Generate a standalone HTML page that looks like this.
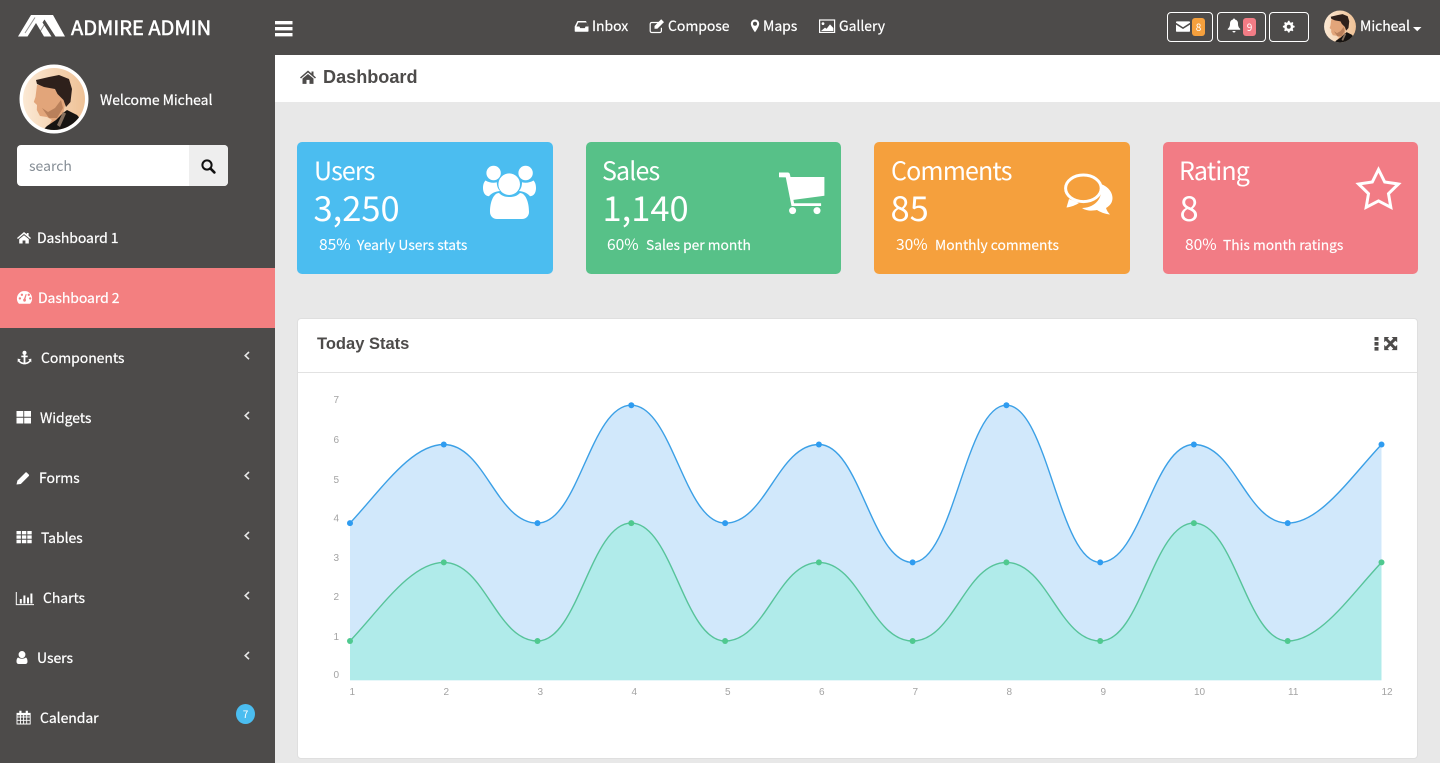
<!DOCTYPE html>
<html lang="en">
<head>
<meta charset="utf-8">
<title>Admire Admin - Dashboard</title>
<style>
*{box-sizing:border-box}
html,body{margin:0;padding:0;width:1440px;height:763px;overflow:hidden;background:#e8e8e8}
body{position:relative;font-family:"Noto Sans CJK SC","Liberation Sans",sans-serif;color:#fff}
.box,.t{position:absolute}
.t{white-space:nowrap;line-height:20px;height:20px}
.nav{font-size:14px;letter-spacing:-.05px;-webkit-text-stroke:.2px #fff}
.m{font-size:14px;letter-spacing:-.07px;-webkit-text-stroke:.2px #fff}
.ct{font-size:25px;letter-spacing:-.85px;line-height:36px;height:36px}
.cn{font-size:34.5px;line-height:44px;height:44px}
.cp{font-size:15.6px}
.cs{font-size:13.8px;-webkit-text-stroke:.15px #fff}
.card{position:absolute;top:142px;height:132px;border-radius:5px}
.btn{position:absolute;top:12px;height:30px;border:1px solid #fff;border-radius:4px}
.badge{position:absolute;top:18px;width:13px;height:18px;border-radius:3px;font-size:10px;line-height:18px;text-align:center}
svg{position:absolute;left:0;top:0}
.yl{font:10px "Liberation Sans",sans-serif;fill:#a3a3a3}
</style>
</head>
<body>
<div class="box" style="left:0;top:0;width:1440px;height:55px;background:#4d4b4a"></div>
<div class="box" style="left:0;top:55px;width:275px;height:708px;background:#4d4b4a"></div>
<div class="box" style="left:275px;top:55px;width:1165px;height:47px;background:#fff"></div>
<div class="box" style="left:0;top:268px;width:275px;height:60px;background:#f37f80"></div>

<div class="t" style="left:71px;top:13px;font-size:20.1px;line-height:28px;height:28px;-webkit-text-stroke:.55px #fff">ADMIRE ADMIN</div>

<div class="t nav" style="left:592px;top:16px">Inbox</div>
<div class="t nav" style="left:668px;top:16px">Compose</div>
<div class="t nav" style="left:763px;top:16px">Maps</div>
<div class="t nav" style="left:839px;top:16px">Gallery</div>

<div class="btn" style="left:1167px;width:46px"></div>
<div class="btn" style="left:1217px;width:49px"></div>
<div class="btn" style="left:1269px;width:40px"></div>
<div class="badge" style="left:1192px;background:#f5a03d">8</div>
<div class="badge" style="left:1243px;background:#f27c85">9</div>
<div class="t nav" style="left:1360px;top:16px">Micheal</div>

<div class="t m" style="left:100px;top:90px">Welcome Micheal</div>

<div class="box" style="left:17px;top:145px;width:211px;height:41px;background:#fff;border-radius:4px;overflow:hidden">
  <div class="box" style="left:172px;top:0;width:39px;height:41px;background:#eee"></div>
  <div class="t" style="left:12px;top:11px;font-size:14px;color:#868e96">search</div>
</div>

<div class="t m" style="left:37px;top:228px">Dashboard 1</div>
<div class="t m" style="left:38px;top:288px">Dashboard 2</div>
<div class="t m" style="left:41px;top:348px">Components</div>
<div class="t m" style="left:40px;top:408px">Widgets</div>
<div class="t m" style="left:39px;top:468px">Forms</div>
<div class="t m" style="left:41px;top:528px">Tables</div>
<div class="t m" style="left:43px;top:588px">Charts</div>
<div class="t m" style="left:37px;top:648px">Users</div>
<div class="t m" style="left:40px;top:708px">Calendar</div>
<div class="box" style="left:236px;top:704px;width:19px;height:20px;border-radius:50%;background:#4bbdf0;font-size:10px;line-height:20px;text-align:center">7</div>

<div class="t" style="left:323px;top:66px;font:bold 18.1px/22px 'Liberation Sans',sans-serif;height:22px;color:#4d4b4a">Dashboard</div>

<div class="card" style="left:297px;width:256px;background:#4bbdf0"></div>
<div class="card" style="left:586px;width:255px;background:#57c188"></div>
<div class="card" style="left:874px;width:256px;background:#f5a03d"></div>
<div class="card" style="left:1163px;width:255px;background:#f27c85"></div>

<div class="t ct" style="left:314px;top:152px">Users</div>
<div class="t cn" style="left:313.5px;top:184px">3,250</div>
<div class="t cp" style="left:319px;top:234px">85%</div>
<div class="t cs" style="left:357px;top:234px">Yearly Users stats</div>

<div class="t ct" style="left:602px;top:152px">Sales</div>
<div class="t cn" style="left:602.5px;top:184px">1,140</div>
<div class="t cp" style="left:607px;top:234px">60%</div>
<div class="t cs" style="left:646px;top:234px">Sales per month</div>

<div class="t ct" style="left:891px;top:152px">Comments</div>
<div class="t cn" style="left:890.5px;top:184px">85</div>
<div class="t cp" style="left:896px;top:234px">30%</div>
<div class="t cs" style="left:935px;top:234px">Monthly comments</div>

<div class="t ct" style="left:1179px;top:152px">Rating</div>
<div class="t cn" style="left:1179.5px;top:184px">8</div>
<div class="t cp" style="left:1185px;top:234px">80%</div>
<div class="t cs" style="left:1223px;top:234px">This month ratings</div>

<div class="box" style="left:297px;top:318px;width:1121px;height:441px;background:#fff;border:1px solid #dfdfdf;border-radius:4px"></div>
<div class="box" style="left:298px;top:372px;width:1119px;height:1px;background:#e2e2e2"></div>
<div class="t" style="left:317px;top:333px;font:bold 16.5px/22px 'Liberation Sans',sans-serif;height:22px;color:#4d4b4a">Today Stats</div>

<svg width="1440" height="763" viewBox="0 0 1440 763" xmlns="http://www.w3.org/2000/svg">
  <defs>
    <clipPath id="c1"><circle cx="35" cy="35" r="31"/></clipPath>
    <linearGradient id="sk" x1="0" x2="1" y1="0" y2="0"><stop offset="0" stop-color="#fcebd8"/><stop offset="1" stop-color="#eebf92"/></linearGradient>
    <symbol id="face" viewBox="0 0 70 70">
      <g clip-path="url(#c1)">
        <rect width="70" height="70" fill="url(#sk)"/>
        <path d="M18 21L16.5 33 14.8 38 18 41 17.8 46 21 52 28 53 33 56 30 61 44 51 46 40 40 22Z" fill="#e2a57a"/>
        <path d="M23 44L29 48 36 44 42 36 44 44 38 54 30 54Z" fill="#b9805b"/>
        <path d="M17 16L30 13 40 11 50 15 53 25 51.5 38 47 43 44.5 36 38.5 30 36 25 25 23 18 20Z" fill="#2e201b"/>
        <path d="M20 70L28 62 37 56 44 49 48 46 58 51 66 60 62 70Z" fill="#171412"/>
        <path d="M44 48L47 49.5 41 63 38 61Z" fill="#85705f"/>
      </g>
    </symbol>
  </defs>

  <!-- logo -->
  <path d="M18 36.5L31 15H53L65 36.5H55.5L44.5 19.5 42.5 22.5 51.5 36.5H44L36 23 27.5 36.5Z" fill="#fff"/>
  <path d="M25 33L35 17.5M37 36.5L46 22" stroke="#4d4b4a" stroke-width="1" fill="none" opacity=".6"/>

  <!-- hamburger -->
  <path d="M275 21h17.5v3.4H275zM275 27h17.5v3.4H275zM275 33h17.5v3.4H275z" fill="#fff"/>

  <!-- top nav icons -->
  <path d="M577.5 21h8.5l2.5 5.5V31q0 .8-.8.8h-12.2q-.8 0-.8-.8v-4.5zM578.3 22.5l-1.8 4h2.9l.8 1.6h4.6l.8-1.6h2.8l-1.8-4z" fill="#fff" fill-rule="evenodd"/>
  <path d="M660.5 22.5h-8.7a1.6 1.6 0 0 0-1.6 1.6v6.8a1.6 1.6 0 0 0 1.6 1.6h8a1.6 1.6 0 0 0 1.6-1.6v-3.2" fill="none" stroke="#fff" stroke-width="1.2"/>
  <path d="M654.5 26l6.7-6.7 2.8 2.8-6.7 6.7h-2.8z" fill="#fff"/>
  <path d="M755 19.5a4.2 4.2 0 0 0-4.2 4.2c0 2.3 2.6 6.3 4.2 8.6 1.6-2.3 4.2-6.3 4.2-8.6a4.2 4.2 0 0 0-4.2-4.2zm0 6.2a2 2 0 1 1 0-4 2 2 0 0 1 0 4z" fill="#fff" fill-rule="evenodd"/>
  <rect x="819.6" y="20" width="15" height="12.4" fill="none" stroke="#fff" stroke-width="1.2"/>
  <circle cx="823" cy="23.6" r="1.4" fill="#fff"/><path d="M821 31l4-3.4 1.6 1.2 3.4-4.4 3.4 3.6V31z" fill="#fff"/>

  <!-- mail / bell / gear -->
  <path d="M1176 22.2q0-.8.8-.8h12.4q.8 0 .8.8v.6l-7 4.4-7-4.4zM1176 24.6l7 4.4 7-4.4V31q0 .8-.8.8h-12.4q-.8 0-.8-.8z" fill="#fff"/>
  <path d="M1234 18.5c.8 0 1 .6 1 1 2 .5 3 2 3 4.2 0 2.6.8 3.8 2.2 5.1v1h-12.4v-1c1.4-1.3 2.2-2.5 2.2-5.1 0-2.2 1-3.7 3-4.2 0-.4.2-1 1-1zM1232.5 31h3a1.5 1.5 0 0 1-3 0z" fill="#fff"/>
  <path d="M1289.5 20.8l.4 1.4 1.2.5 1.3-.7 1 1-.7 1.3.5 1.2 1.4.4v1.5l-1.4.4-.5 1.2.7 1.3-1 1-1.3-.7-1.2.5-.4 1.4h-1.5l-.4-1.4-1.2-.5-1.3.7-1-1 .7-1.3-.5-1.2-1.4-.4v-1.5l1.4-.4.5-1.2-.7-1.3 1-1 1.3.7 1.2-.5.4-1.4zm-.75 3.9a2 2 0 1 0 0 4 2 2 0 0 0 0-4z" fill="#fff" fill-rule="evenodd"/>
  <use href="#face" x="1322" y="8.5" width="36" height="36"/>
  <path d="M1413 27h8.5l-4.25 4.2z" fill="#fff"/>

  <!-- sidebar avatar -->
  <circle cx="54" cy="99" r="34.5" fill="#fff"/>
  <use href="#face" x="19" y="64" width="70" height="70"/>

  <!-- search icon -->
  <circle cx="207" cy="165" r="4.6" fill="none" stroke="#111" stroke-width="2"/>
  <path d="M210.4 168.4l4 4" stroke="#111" stroke-width="2.6" stroke-linecap="round"/>

  <!-- home title icon -->
  <path d="M308 70.5L300 77.5l1 1 7-6 7 6 1-1-2.5-2.2V71.5h-2v2zM308 74L302.5 78.5v5.4h4v-4h3v4h4v-5.4z" fill="#4d4b4a"/>

  <!-- sidebar icons -->
  <path d="M24 232L17 238l.9 1L24 234l6.1 5 .9-1-2.4-2.1V233h-1.8v1.2zM24 235.2l-4.8 3.9v4.4h3.4v-3h2.8v3h3.4v-4.4z" fill="#fff"/>
  <path d="M24.5 291a7.6 7.6 0 0 0-7.6 7.6c0 1.8.6 3.4 1.6 4.7.2.3.5.4.9.4h10.2c.4 0 .7-.1.9-.4 1-1.3 1.6-2.9 1.6-4.7a7.6 7.6 0 0 0-7.6-7.6zm-4.6 8.6a1.2 1.2 0 1 1 0-2.4 1.2 1.2 0 0 1 0 2.4zm2-3.6a1.2 1.2 0 1 1 0-2.4 1.2 1.2 0 0 1 0 2.4zm2.7 5.8a1.7 1.7 0 0 1-.6-3.2l1.7-4.6 1 .3-1.2 4.6a1.7 1.7 0 0 1-.9 2.9zm4.2-5.8a1.2 1.2 0 1 1 0-2.4 1.2 1.2 0 0 1 0 2.4zm1.4 3.6a1.2 1.2 0 1 1 0-2.4 1.2 1.2 0 0 1 0 2.4z" fill="#fff" fill-rule="evenodd"/>
  <path d="M24.5 350.8a2 2 0 0 1 .9 3.8v1h2.3v1.7h-2.3v5.3c1.7-.2 3.3-1 4-2.1l-1.1-1.1 3-.8v3.8l-.9-.9c-1.1 1.7-3.4 2.9-5.9 2.9s-4.8-1.2-5.9-2.9l-.9.9v-3.8l3 .8-1.1 1.1c.7 1.1 2.3 1.9 4 2.1v-5.3h-2.3v-1.7h2.3v-1a2 2 0 0 1 .9-3.8z" fill="#fff"/>
  <path d="M16.5 411h6.8v5.7h-6.8zM24.2 411h6.8v5.7h-6.8zM16.5 417.8h6.8v5.7h-6.8zM24.2 417.8h6.8v5.7h-6.8z" fill="#fff"/>
  <path d="M16.5 484.5l.9-3.9 8-8a1 1 0 0 1 1.4 0l2 2a1 1 0 0 1 0 1.4l-8 8z" fill="#fff"/>
  <path d="M16.5 531h4.4v3.4h-4.4zM21.9 531h4.4v3.4h-4.4zM27.3 531h4.4v3.4h-4.4zM16.5 535.4h4.4v3.4h-4.4zM21.9 535.4h4.4v3.4h-4.4zM27.3 535.4h4.4v3.4h-4.4zM16.5 539.8h4.4v3.4h-4.4zM21.9 539.8h4.4v3.4h-4.4zM27.3 539.8h4.4v3.4h-4.4z" fill="#fff"/>
  <path d="M16.3 592v12.6H34" fill="none" stroke="#fff" stroke-width="1"/>
  <path d="M19.8 599h2v4.5h-2zM23.4 595.5h2v8h-2zM27 597.5h2v6h-2zM30.4 593.5h2v10h-2z" fill="#fff"/>
  <path d="M22 651a3.5 3.5 0 0 1 3.4 3.7 3.4 3.4 0 1 1-6.8 0 3.5 3.5 0 0 1 3.4-3.7zM18.1 657.5c1 .8 2.4 1.2 3.9 1.2s2.9-.4 3.9-1.2c1.2.5 1.6 2.4 1.6 4.1 0 1.6-.9 2.4-2.3 2.4h-6.4c-1.4 0-2.3-.8-2.3-2.4 0-1.7.4-3.6 1.6-4.1z" fill="#fff"/>
  <path d="M17 713.3h13.2v10.7H17zM17 717h13.2M17 720.3h13.2M20.5 713.3V724M23.6 713.3V724M26.7 713.3V724" fill="none" stroke="#fff" stroke-width=".9"/>
  <path d="M19.3 710.8h2.2v3.6h-2.2zM25.7 710.8h2.2v3.6h-2.2zM17 713h13.2v2.3H17z" fill="#fff"/>

  <!-- chevrons -->
  <g fill="none" stroke="#e8e8e8" stroke-width="1.6">
    <path d="M249 352l-3.8 3.6 3.8 3.6"/><path d="M249 412l-3.8 3.6 3.8 3.6"/><path d="M249 472l-3.8 3.6 3.8 3.6"/><path d="M249 532l-3.8 3.6 3.8 3.6"/><path d="M249 592l-3.8 3.6 3.8 3.6"/><path d="M249 652l-3.8 3.6 3.8 3.6"/>
  </g>

  <!-- card icons -->
  <g fill="#fff">
    <circle cx="493.6" cy="173" r="7.2"/><circle cx="525.6" cy="173" r="7.2"/><circle cx="509.2" cy="184.2" r="10.8"/>
    <path d="M490 212C490 201 494 193 499 193 502 196 505 197 509.5 197 514 197 517 196 520 193 525 193 529 201 529 212 529 216 526 219 522 219H497C493 219 490 216 490 212Z"/>
    <path d="M485.5 180.5C489 182.6 493 183.3 496.8 182.3 496.8 186 498 189 500 191 495 191.5 491 193.5 489 196.2 485 196 483 192.5 483 188 483 184.5 484 182 485.5 180.5Z"/>
    <path d="M533.5 180.5C530 182.6 526 183.3 522 182.3 522 186 521 189 519 191 524 191.5 528 193.5 530 196.2 534 196 536 192.5 536 188 536 184.5 535 182 533.5 180.5Z"/>

    <path d="M779 172.5h8.6q2 0 2.4 2.2l.5 2.3h33.9v18.8l-31 4.1.7 3.3h27v2.8h-29.6l-5.7-28.6-6.8-.1z"/>
    <circle cx="792.6" cy="210.6" r="3.5"/><circle cx="817" cy="210.6" r="3.5"/>
  </g>

  <path d="M1101 184C1109 187 1112.5 193 1112.5 198 1112.5 203 1109.5 206 1106 208 1107 211 1108.5 213 1110 214.5 1105 214 1100 212 1097 210 1092 211 1086 211 1082 208 1092 208 1104 201 1101 184Z" fill="#fff"/>
  <path d="M1069 199L1066.5 207.5C1071 207 1076 205 1079 203Z" fill="#fff"/>
  <ellipse cx="1083.4" cy="188.3" rx="17.8" ry="13.3" fill="#f5a03d" stroke="#fff" stroke-width="3"/>

  <path d="M1378.5 169.5L1384.7 182 1398.4 184 1388.5 193.7 1390.8 207.3 1378.5 200.9 1366.2 207.3 1368.5 193.7 1358.6 184 1372.3 182Z" fill="none" stroke="#fff" stroke-width="3" stroke-linejoin="miter"/>

  <!-- panel action icons -->
  <path d="M1374.5 337h4v3.6h-4zM1374.5 342h4v3.6h-4zM1374.5 347h4v3.6h-4z" fill="#4d4b4a"/>
  <g transform="translate(1.2 0)"><path d="M1383 337h5l-1.6 1.6 2.8 2.8 2.8-2.8-1.6-1.6h5.6v5.3l-1.8-1.6-2.9 2.9 2.9 2.9 1.8-1.6v5.2h-5.6l1.6-1.6-2.8-2.8-2.8 2.8 1.6 1.6h-5v-5.2l1.6 1.6 2.8-2.9-2.8-2.9-1.6 1.6z" fill="#4d4b4a"/></g>

  <!-- chart -->
  <path d="M350 523.1C381 490 411 444.5 443.8 444.5C484.8 444.5 496.5 523.1 537.5 523.1C578.5 523.1 590.3 405.2 631.3 405.2C672.3 405.2 684.1 523.1 725.1 523.1C766.1 523.1 777.9 444.5 818.9 444.5C859.9 444.5 871.6 562.4 912.6 562.4C953.6 562.4 965.4 405.2 1006.4 405.2C1047.4 405.2 1059.2 562.4 1100.2 562.4C1141.2 562.4 1152.9 444.5 1193.9 444.5C1234.9 444.5 1246.7 523.1 1287.7 523.1C1320 523.1 1350 478 1381.5 444.5V680.3H350Z" fill="#d1e8fb"/>
  <path d="M350 641C381 608 411 562.4 443.8 562.4C484.8 562.4 496.5 641 537.5 641C578.5 641 590.3 523.1 631.3 523.1C672.3 523.1 684.1 641 725.1 641C766.1 641 777.9 562.4 818.9 562.4C859.9 562.4 871.6 641 912.6 641C953.6 641 965.4 562.4 1006.4 562.4C1047.4 562.4 1059.2 641 1100.2 641C1141.2 641 1152.9 523.1 1193.9 523.1C1234.9 523.1 1246.7 641 1287.7 641C1320 641 1350 596 1381.5 562.4V680.3H350Z" fill="#b0ebea"/>
  <path d="M350 523.1C381 490 411 444.5 443.8 444.5C484.8 444.5 496.5 523.1 537.5 523.1C578.5 523.1 590.3 405.2 631.3 405.2C672.3 405.2 684.1 523.1 725.1 523.1C766.1 523.1 777.9 444.5 818.9 444.5C859.9 444.5 871.6 562.4 912.6 562.4C953.6 562.4 965.4 405.2 1006.4 405.2C1047.4 405.2 1059.2 562.4 1100.2 562.4C1141.2 562.4 1152.9 444.5 1193.9 444.5C1234.9 444.5 1246.7 523.1 1287.7 523.1C1320 523.1 1350 478 1381.5 444.5" fill="none" stroke="#3ba0e6" stroke-width="1.4"/>
  <path d="M350 641C381 608 411 562.4 443.8 562.4C484.8 562.4 496.5 641 537.5 641C578.5 641 590.3 523.1 631.3 523.1C672.3 523.1 684.1 641 725.1 641C766.1 641 777.9 562.4 818.9 562.4C859.9 562.4 871.6 641 912.6 641C953.6 641 965.4 562.4 1006.4 562.4C1047.4 562.4 1059.2 641 1100.2 641C1141.2 641 1152.9 523.1 1193.9 523.1C1234.9 523.1 1246.7 641 1287.7 641C1320 641 1350 596 1381.5 562.4" fill="none" stroke="#57c39a" stroke-width="1.4"/>
  <g fill="#2f9cf0">
    <circle cx="350" cy="523.1" r="3"/><circle cx="443.8" cy="444.5" r="3"/><circle cx="537.5" cy="523.1" r="3"/><circle cx="631.3" cy="405.2" r="3"/><circle cx="725.1" cy="523.1" r="3"/><circle cx="818.9" cy="444.5" r="3"/><circle cx="912.6" cy="562.4" r="3"/><circle cx="1006.4" cy="405.2" r="3"/><circle cx="1100.2" cy="562.4" r="3"/><circle cx="1193.9" cy="444.5" r="3"/><circle cx="1287.7" cy="523.1" r="3"/><circle cx="1381.5" cy="444.5" r="3"/>
  </g>
  <g fill="#4fc98f">
    <circle cx="350" cy="641" r="3"/><circle cx="443.8" cy="562.4" r="3"/><circle cx="537.5" cy="641" r="3"/><circle cx="631.3" cy="523.1" r="3"/><circle cx="725.1" cy="641" r="3"/><circle cx="818.9" cy="562.4" r="3"/><circle cx="912.6" cy="641" r="3"/><circle cx="1006.4" cy="562.4" r="3"/><circle cx="1100.2" cy="641" r="3"/><circle cx="1193.9" cy="523.1" r="3"/><circle cx="1287.7" cy="641" r="3"/><circle cx="1381.5" cy="562.4" r="3"/>
  </g>
  <g class="yl">
    <text x="333.5" y="403">7</text><text x="333.5" y="443">6</text><text x="333.5" y="483">5</text><text x="333.5" y="521.5">4</text><text x="333.5" y="561">3</text><text x="333.5" y="600">2</text><text x="333.5" y="640">1</text><text x="333.5" y="678">0</text>
    <text x="349.5" y="695">1</text><text x="443.5" y="695">2</text><text x="537.5" y="695">3</text><text x="631.5" y="695">4</text><text x="725" y="695">5</text><text x="819" y="695">6</text><text x="912.5" y="695">7</text><text x="1006.5" y="695">8</text><text x="1100.5" y="695">9</text><text x="1194" y="695">10</text><text x="1288" y="695">11</text><text x="1381.5" y="695">12</text>
  </g>
</svg>
</body>
</html>
